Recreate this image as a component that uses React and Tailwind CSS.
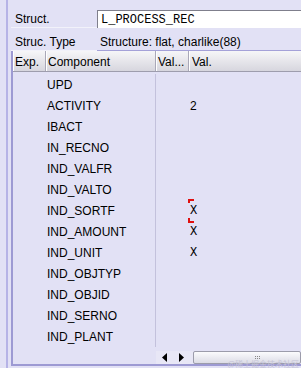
import React from 'react';

const rows = [
  { name: 'UPD', val: '' },
  { name: 'ACTIVITY', val: '2' },
  { name: 'IBACT', val: '' },
  { name: 'IN_RECNO', val: '' },
  { name: 'IND_VALFR', val: '' },
  { name: 'IND_VALTO', val: '' },
  { name: 'IND_SORTF', val: 'X', focus: true },
  { name: 'IND_AMOUNT', val: 'X' },
  { name: 'IND_UNIT', val: 'X' },
  { name: 'IND_OBJTYP', val: '' },
  { name: 'IND_OBJID', val: '' },
  { name: 'IND_SERNO', val: '' },
  { name: 'IND_PLANT', val: '' },
];

const HeadCell = ({ className, children }) => (
  <div className={`h-full flex items-center pl-[2px] pt-[1px] border-r border-r-[#a9a8b8] shadow-[inset_1px_0_0_#ffffff] ${className}`}>
    {children}
  </div>
);

const App = () => {
  return (
    <div className="w-[301px] h-[368px] bg-[#e2e1f5] flex overflow-hidden text-[12px] text-black font-['Liberation_Sans',Arial,sans-serif] leading-none">
      <div className="w-[6px] shrink-0" />
      <div className="w-[2px] shrink-0 bg-[#b6b3e6]" />
      <div className="flex-1 flex flex-col pl-[3px] pt-[10px] min-w-0">
        {/* Struct. */}
        <div className="flex h-[18px]">
          <div className="w-[86px] shrink-0 flex items-center pl-[4px] pt-[1px] border-b border-b-[#f2f2fa]">Struct.</div>
          <div className="flex-1 bg-white border-t border-l border-t-[#7f7f8c] border-l-[#7f7f8c] flex items-center pl-[3px] font-['Liberation_Mono',monospace] text-[12px]">
            L_PROCESS_REC
          </div>
        </div>
        {/* Struc. Type */}
        <div className="flex h-[21px] mt-[2px]">
          <div className="w-[86px] shrink-0 flex items-center pl-[4px] pt-[3px] border-b border-b-[#f2f2fa]">Struc. Type</div>
          <div className="flex-1 flex items-center pl-[3px] pt-[3px] border-b border-b-[#a4a1d8]">Structure: flat, charlike(88)</div>
        </div>
        {/* Table */}
        <div className="flex-1 flex flex-col border-l-2 border-l-[#9d9ad3] border-b-2 border-b-[#9d9ad3] mb-[2px] min-h-0">
          <div className="flex h-[21px] shrink-0 bg-gradient-to-b from-[#f6f6f8] to-[#d7d6de] border-b border-b-[#9e9dad]">
            <HeadCell className="w-[33px] shrink-0">Exp.</HeadCell>
            <HeadCell className="w-[110px] shrink-0">Component</HeadCell>
            <HeadCell className="w-[33px] shrink-0">Val...</HeadCell>
            <div className="flex-1 h-full flex items-center pl-[3px] pt-[1px] shadow-[inset_1px_0_0_#ffffff]">Val.</div>
          </div>
          <div className="flex flex-col pt-[2px]">
            {rows.map((r) => (
              <div key={r.name} className="flex h-[21px]">
                <div className="w-[33px] shrink-0" />
                <div className="w-[110px] shrink-0 flex items-center pl-[1px] border-r border-r-[#c3c1dc]">{r.name}</div>
                <div className="w-[33px] shrink-0" />
                <div className="flex-1 flex items-center pl-[1px] relative">
                  {r.focus && (
                    <>
                      <span className="absolute left-[-1px] top-[-1px] w-[6px] h-[4px] border-t-2 border-l-2 border-[#e01010]" />
                      <span className="absolute left-[-1px] bottom-[-2px] w-[6px] h-[5px] border-b-2 border-l-2 border-[#e01010]" />
                    </>
                  )}
                  <span className={r.val === 'X' ? "font-['Liberation_Mono',monospace] text-[12px]" : ''}>{r.val}</span>
                </div>
              </div>
            ))}
          </div>
          {/* scrollbar */}
          <div className="flex h-[14px] mt-[4px] relative">
            <div className="w-[143px] shrink-0" />
            <div className="w-[37px] shrink-0 flex items-center bg-[#e8e7f6]">
              <div className="w-[17px] flex justify-center">
                <svg width="5" height="9" viewBox="0 0 5 9"><path d="M5 0 L0 4.5 L5 9 Z" fill="#000" /></svg>
              </div>
              <div className="w-[17px] flex justify-center">
                <svg width="5" height="9" viewBox="0 0 5 9"><path d="M0 0 L5 4.5 L0 9 Z" fill="#000" /></svg>
              </div>
            </div>
            <div className="flex-1 border border-[#9c9cab] rounded-[2px] bg-gradient-to-b from-[#fbfbfd] to-[#dcdce6] flex items-center justify-center">
              <div className="flex flex-col gap-[1px] ml-[20px]">
                <div className="flex gap-[1px]"><span className="w-[1px] h-[1px] bg-[#888]" /><span className="w-[1px] h-[1px] bg-[#888]" /><span className="w-[1px] h-[1px] bg-[#888]" /></div>
                <div className="flex gap-[1px]"><span className="w-[1px] h-[1px] bg-[#888]" /><span className="w-[1px] h-[1px] bg-[#888]" /><span className="w-[1px] h-[1px] bg-[#888]" /></div>
              </div>
            </div>
            <span className="absolute right-[2px] bottom-[-4px] text-[8px] text-[#c4c3d6] font-['Noto_Sans_CJK_SC',sans-serif]">@稀土掘金技术社区</span>
          </div>
        </div>
      </div>
    </div>
  );
};

export default App;
